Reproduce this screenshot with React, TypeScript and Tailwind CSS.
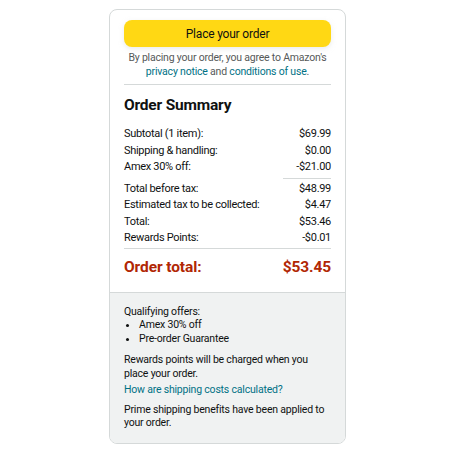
import React from 'react';

const font = { fontFamily: 'Roboto, "Liberation Sans", Arial, sans-serif' };

const Row = ({ label, value }: { label: string; value: string }) => (
  <div className="flex justify-between h-[16.5px] items-center">
    <span>{label}</span>
    <span>{value}</span>
  </div>
);

export default function App() {
  return (
    <div className="min-h-[450px] bg-white pt-[9px]" style={font}>
      <div className="ml-[109px] w-[237px] border border-[#D5D9D9] rounded-[8px] overflow-hidden text-[#0F1111]">
        <div className="px-[14px] pt-[10px]">
          <button className="w-full h-[27px] rounded-[8px] bg-[#FFD814] text-[12px] tracking-[-0.2px] text-[#0F1111] shadow-[0_2px_5px_0_rgba(213,217,217,0.5)]">
            Place your order
          </button>
          <p className="mt-[4px] text-center text-[10.5px] tracking-[-0.2px] leading-[13.5px] text-[#565959]">
            By placing your order, you agree to Amazon's{' '}
            <span className="text-[#007185]">privacy notice</span> and{' '}
            <span className="text-[#007185]">conditions of use</span>.
          </p>
          <div className="mt-[6px] border-t border-[#D5D9D9]" />
          <h2 className="mt-[9px] text-[15.5px] tracking-[-0.2px] font-bold leading-[22px]">Order Summary</h2>
          <div className="mt-[10px] text-[11px] tracking-[-0.3px]">
            <Row label="Subtotal (1 item):" value="$69.99" />
            <Row label="Shipping & handling:" value="$0.00" />
            <Row label="Amex 30% off:" value="-$21.00" />
            <div className="flex justify-end my-[2px]">
              <div className="w-[48px] border-t border-[#D5D9D9]" />
            </div>
            <Row label="Total before tax:" value="$48.99" />
            <Row label="Estimated tax to be collected:" value="$4.47" />
            <Row label="Total:" value="$53.46" />
            <Row label="Rewards Points:" value="-$0.01" />
          </div>
          <div className="mt-[1px] border-t border-[#D5D9D9]" />
          <div className="flex justify-between items-center h-[38px] text-[15.5px] tracking-[-0.1px] font-bold text-[#B12704]">
            <span>Order total:</span>
            <span>$53.45</span>
          </div>
        </div>
        <div className="mt-[5px] bg-[#F0F2F2] border-t border-[#D5D9D9] px-[14px] pt-[12px] pb-[13px] text-[10.5px] tracking-[-0.2px] leading-[13.5px]">
          <p>Qualifying offers:</p>
          <ul className="list-disc pl-[15px]">
            <li>Amex 30% off</li>
            <li>Pre-order Guarantee</li>
          </ul>
          <p className="mt-[8px]">Rewards points will be charged when you place your order.</p>
          <p className="mt-[3px] text-[#007185]">How are shipping costs calculated?</p>
          <p className="mt-[6px]">Prime shipping benefits have been applied to your order.</p>
        </div>
      </div>
    </div>
  );
}
